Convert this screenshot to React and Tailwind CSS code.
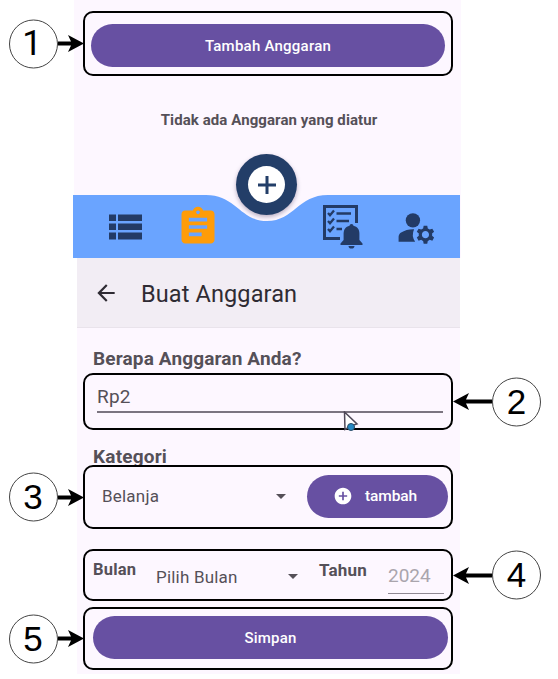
import React from "react";
import { MdAssignment, MdManageAccounts, MdArrowBack, MdAddCircle, MdArrowDropDown } from "react-icons/md";

function Callout({ n, side = "left" }) {
  const left = side === "left";
  // Roboto draws its "1" without a foot
  const font = n === "1" ? "font-[Roboto,sans-serif] pr-[2px]" : "font-['Liberation_Sans',sans-serif]";
  return (
    <div
      className={
        left
          ? "absolute right-full top-1/2 mr-[1.500px] -translate-y-1/2 flex items-center"
          : "absolute left-full top-1/2 ml-[2px] -translate-y-1/2 flex flex-row-reverse items-center"
      }
    >
      <span
        className={
          "flex size-[49px] shrink-0 items-center justify-center rounded-full border border-[#444] bg-white pb-[2px] text-[35px] leading-none text-black " +
          font
        }
      >
        {n}
      </span>
      {left ? (
        <svg width="26" height="18" viewBox="0 0 26 18" className="block shrink-0">
          <path d="M0 7H13L10 0.500L26 9L10 17.500L13 11H0Z" fill="#000" />
        </svg>
      ) : (
        <svg width="39" height="18" viewBox="0 0 39 18" className="block shrink-0">
          <path d="M39 7H13L16 0.500L0 9L16 17.500L13 11H39Z" fill="#000" />
        </svg>
      )}
    </div>
  );
}

function Frame({ n, side, className, children }) {
  return (
    <section className={"relative w-[370px] rounded-[10px] border-2 border-black " + className}>
      {children}
      <Callout n={n} side={side} />
    </section>
  );
}

function BellChecklist() {
  return (
    <svg width="42" height="46" viewBox="0 0 42 46" fill="none" stroke="#233b66" className="ml-[102px] mt-[9px]">
      <path d="M18 34.500H2.500V2.500H34.500V19" strokeWidth="3" />
      <path d="M6 9l2 2.200 4-4.700M6 17l2 2.200 4-4.700M6 25l2 2.200 4-4.700" strokeWidth="2.300" />
      <path d="M14.500 9.500H29M14.500 17H27M14.500 25H20" strokeWidth="2.400" />
      <path
        d="M29.500 20c1.200 0 1.800.8 1.900 1.700 4 .9 6 3.900 6 7.800v6.500l3.100 3.500v1.500h-22v-1.500l3.100-3.500v-6.500c0-3.900 2-6.900 6-7.800.1-.9.700-1.700 1.900-1.700ZM26.500 42h6c0 1.600-1.300 2.600-3 2.600s-3-1-3-2.600Z"
        fill="#233b66"
        stroke="none"
      />
    </svg>
  );
}

function NavBar() {
  return (
    <nav className="relative -ml-px h-[63px] w-[387px]">
      <svg width="387" height="63" viewBox="0 0 387 63" className="block">
        <path d="M0 0H133C163 0 167 26 194 26S225 0 255 0H387V63H0Z" fill="#6aa4ff" />
      </svg>
      <button className="absolute left-[163px] top-[-41px] flex size-[61px] items-center justify-center rounded-full bg-[#233e68] shadow-[0_2px_4px_rgba(60,40,80,0.35)]">
        <span className="flex size-[37px] items-center justify-center rounded-full bg-white">
          <svg width="20" height="20" viewBox="0 0 20 20">
            <path d="M10 1V19M1 10H19" stroke="#233e68" strokeWidth="3" />
          </svg>
        </span>
      </button>
      <div className="absolute inset-0 flex items-start">
        <svg width="33" height="26" viewBox="0 0 33 26" fill="#233b66" className="ml-[36px] mt-[19px]">
          <path d="M0 0.500h7v6.500H0zM9 0.500h24v6.500H9zM0 9.500h7v6.500H0zM9 9.500h24v6.500H9zM0 18.500h7v7H0zM9 18.500h24v7H9z" />
        </svg>
        <MdAssignment className="ml-[34px] mt-[10px] size-[44px] text-[#ff9c08]" />
        <BellChecklist />
        <MdManageAccounts className="ml-[31px] mt-[11px] size-[43px] text-[#233b66]" />
      </div>
    </nav>
  );
}

function Pointer() {
  return (
    <svg width="17" height="21" viewBox="0 0 17 21" className="absolute left-[258px] top-[36px]">
      <path d="M1.500 1L14 13L9 14.500L2 18.500Z" fill="#fff" stroke="#4f4858" strokeWidth="1.500" />
      <circle cx="8" cy="16" r="3.500" fill="#2489c4" stroke="#2b4c66" strokeWidth="1" />
    </svg>
  );
}

export default function App() {
  return (
    <main className="h-[679px] w-[558px] overflow-hidden bg-white font-[Roboto,sans-serif] text-[#555058]">
      <div className="ml-[74px] flex h-[258px] w-[387px] flex-col bg-[#fdf7ff]">
        <Frame n="1" side="left" className="ml-[9px] mt-[11px] h-[65px] px-[6px] pt-[11px]">
          <button className="flex h-[43px] w-full items-center justify-center rounded-full bg-[#6750a2] pt-[2px] text-[15px] font-medium tracking-[0.240px] text-white">
            Tambah Anggaran
          </button>
        </Frame>
        <p className="mt-[34px] h-[85px] pl-[3px] text-center text-[15px] font-bold leading-[20px] tracking-[0.080px]">
          Tidak ada Anggaran yang diatur
        </p>
        <NavBar />
      </div>

      <div className="ml-[77px] h-[416px] w-[383px] bg-[#fdf7ff]">
        <header className="flex h-[70px] items-center border-b border-[#e9e3eb] bg-[#f2edf4] pl-[16px] text-[#2f2b33]">
          <MdArrowBack className="size-[26px]" />
          <h1 className="ml-[22px] pt-[4px] text-[23.500px] tracking-[0.120px]">Buat Anggaran</h1>
        </header>

        <h2 className="ml-[16px] pt-[19px] text-[19px] font-bold leading-[24px] tracking-[0.150px]">
          Berapa Anggaran Anda?
        </h2>
        <Frame n="2" side="right" className="ml-[6px] mt-[2px] h-[57px] px-[12px] pt-[10px]">
          <div className="h-[28px] w-[346px] border-b-2 border-[#7b7480] text-[19px] leading-[24px] tracking-[0.200px]">
            Rp2
          </div>
          <Pointer />
        </Frame>

        <h2 className="ml-[16px] mt-[15px] text-[19px] font-bold leading-[24px] tracking-[0.200px]">Kategori</h2>
        <Frame n="3" side="left" className="-mt-[4px] ml-[6px] flex h-[64px] items-center pb-[2px] pl-[17px]">
          <span className="w-[167px] pt-px text-[17px] tracking-[0.200px]">Belanja</span>
          <MdArrowDropDown className="size-[24px]" />
          <button className="ml-[14px] flex h-[43px] w-[141px] items-center rounded-full bg-[#6750a2] pl-[26px] text-[15.500px] font-medium text-white">
            <MdAddCircle className="size-[20px]" />
            <span className="ml-[12px] pt-[2px] tracking-[-0.100px]">tambah</span>
          </button>
        </Frame>

        <Frame n="4" side="right" className="ml-[6px] mt-[20px] flex h-[52px] items-start pl-[8px]">
          <span className="mt-[9px] w-[63px] text-[16.500px] font-bold leading-[20px] tracking-[0.200px]">Bulan</span>
          <span className="mt-[15px] w-[125px] text-[17px] leading-[22px] tracking-[0.200px]">Pilih Bulan</span>
          <MdArrowDropDown className="mt-[13px] size-[24px]" />
          <span className="ml-[14px] mt-[9px] w-[69px] text-[17px] font-bold leading-[20px] tracking-[0.200px]">
            Tahun
          </span>
          <span className="mt-[13px] h-[30px] w-[56px] border-b border-[#8f8893] text-[19px] leading-[24px] text-[#aaa5ad]">
            2024
          </span>
        </Frame>

        <Frame n="5" side="left" className="ml-[6px] mt-[6px] h-[63px] pl-[8px] pr-[3px] pt-[7px]">
          <button className="flex h-[43px] w-full items-center justify-center rounded-full bg-[#6750a2] pt-[2px] text-[15px] font-medium tracking-[0.200px] text-white">
            Simpan
          </button>
        </Frame>
      </div>
    </main>
  );
}
